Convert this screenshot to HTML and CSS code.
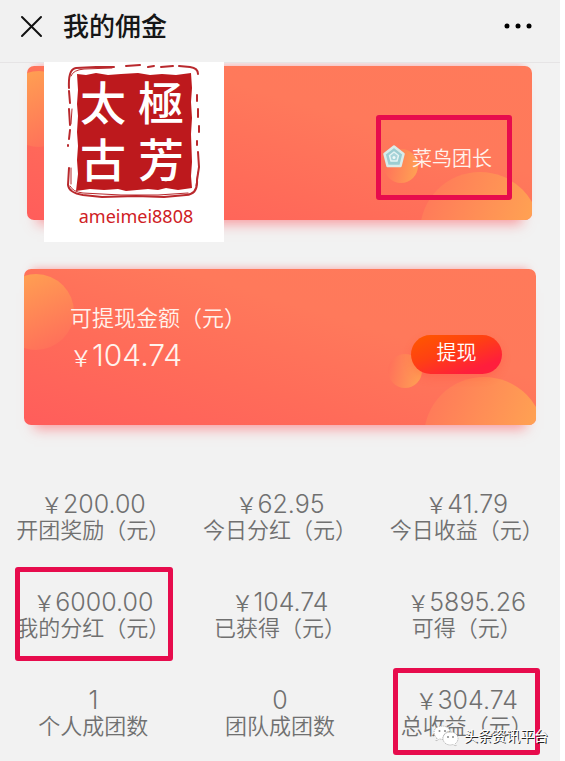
FILE: index.html
```html
<!DOCTYPE html>
<html lang="zh-CN">
<head>
<meta charset="utf-8">
<meta name="viewport" content="width=device-width, initial-scale=1">
<title>我的佣金</title>
<link rel="stylesheet" href="styles.css">
</head>
<body>
<div class="page">
  <header class="topbar">
    <button class="icon-button" type="button" aria-label="关闭">
      <svg width="24" height="24" viewBox="0 0 24 24"><path d="M3 3L22 22M22 3L3 22"/></svg>
    </button>
    <h1 class="title">我的佣金</h1>
    <button class="icon-button more" type="button" aria-label="更多">
      <svg width="28" height="6" viewBox="0 0 28 6"><circle cx="3" cy="3" r="2.5"/><circle cx="14" cy="3" r="2.5"/><circle cx="25" cy="3" r="2.5"/></svg>
    </button>
  </header>

  <main>
    <section class="card member">
      <div class="art"><i class="orb orb-left"></i><i class="orb orb-small"></i><i class="orb orb-large"></i></div>
      <div class="sticker">
        <div class="seal">
          <svg class="seal-frame" viewBox="0 0 136 136" fill="none">
            <path class="seal-fill" d="M11 10L20 11L30 9L42 11L55 10L72 9L84 11L96 10L110 11L125 9L126 24L125 38L126 54L125 70L126 98L125 112L126 124L112 126L100 124L92 126L82 125L60 127L52 125L38 126L24 125L10 127L12 110L11 96L12 82L11 68L12 52L11 40L12 26Z"/>
            <path class="seal-line" d="M3 24Q2 5 10 4L30 3L48 3M60 2L74 1M82 3L88 2M95 3L107 2M113 2L124 3Q132 4 132 10M3 27L4 39M3 45L4 61M4 66L3 75M2 81V82M3 104L2 121Q3 129 17 131L36 133L70 132L98 133L120 131Q132 130 131 116L133 103L132 88M131 31V37M132 45V53M133 62V68M131 77V81"/>
            <path class="seal-line thin" d="M5 12Q7 6 18 5L46 4M5 104L5 120M4 122Q7 128 17 129L55 131L92 131L122 129M130 122L132 108M6 45L5 60"/>
          </svg>
          <div class="seal-text"><span>太</span><span>極</span><span>古</span><span>芳</span></div>
        </div>
        <p class="account">ameimei8808</p>
      </div>
      <div class="rank">
        <svg width="22" height="24" viewBox="0 0 22 24"><path d="M11 1.500L20.500 9L17.500 21H4.500L1.500 9Z" fill="#9ccdd2" stroke="#d9ecea" stroke-width="2.500" stroke-linejoin="round"/><path d="M11 7L15.500 10.500L14 16H8L6.500 10.500Z" fill="#a9d5da" stroke="#e4f3f3" stroke-width="1.500" stroke-linejoin="round"/><circle cx="11" cy="12.500" r="1.500" fill="#eef8f8"/></svg>
        <span>菜鸟团长</span>
      </div>
    </section>

    <section class="card balance">
      <div class="art"><i class="orb orb-left"></i><i class="orb orb-small"></i><i class="orb orb-large"></i></div>
      <div class="balance-info">
        <p class="balance-label">可提现金额（元）</p>
        <p class="balance-amount"><span class="yen">￥</span>104.74</p>
      </div>
      <button class="withdraw" type="button">提现</button>
    </section>

    <dl class="stats">
      <div class="stat"><dd><span class="yen">￥</span>200.00</dd><dt>开团奖励（元）</dt></div>
      <div class="stat"><dd><span class="yen">￥</span>62.95</dd><dt>今日分红（元）</dt></div>
      <div class="stat"><dd><span class="yen">￥</span>41.79</dd><dt>今日收益（元）</dt></div>
      <div class="stat marked"><dd><span class="yen">￥</span>6000.00</dd><dt>我的分红（元）</dt></div>
      <div class="stat"><dd><span class="yen">￥</span>104.74</dd><dt>已获得（元）</dt></div>
      <div class="stat"><dd><span class="yen">￥</span>5895.26</dd><dt>可得（元）</dt></div>
      <div class="stat"><dd>1</dd><dt>个人成团数</dt></div>
      <div class="stat"><dd>0</dd><dt>团队成团数</dt></div>
      <div class="stat marked total"><dd><span class="yen">￥</span>304.74</dd><dt>总收益（元）</dt></div>
    </dl>
  </main>

  <div class="watermark">
    <svg width="26" height="22" viewBox="0 0 26 22"><path d="M9 1C4 1 1 4 1 7.500C1 10 2 11.500 4 13L3 16L6.500 14L10 14.500C10 9 13 6.500 17.500 6C16 3 13 1 9 1Z"/><path d="M17.500 7C13 7 10 10 10 13.500C10 17 13 20 17.500 20L20 19.500L23 21L22.500 18.500C24 17.500 25 15.500 25 13.500C25 10 22 7 17.500 7Z"/><g class="eyes"><circle cx="6.500" cy="6" r="1"/><circle cx="12" cy="6" r="1"/><circle cx="15" cy="12" r="1"/><circle cx="20" cy="12" r="1"/></g></svg>
    <span>头条资讯平台</span>
  </div>
</div>
</body>
</html>
```
FILE: styles.css
```css
* { box-sizing: border-box; }

body {
  margin: 0;
  background: #fff;
  color: #707070;
  font-family: "Noto Sans", "Noto Sans CJK SC", sans-serif;
}

h1, p, dl, dd { margin: 0; }

button {
  border: 0;
  padding: 0;
  background: none;
  font-family: inherit;
}

.page {
  position: relative;
  min-height: 100vh;
  margin-right: 5px;
  overflow: hidden;
  background: #f2f2f2;
}

.topbar {
  position: relative;
  z-index: 1;
  display: flex;
  align-items: center;
  height: 62px;
  padding: 0 28px 10px 19px;
  background: #f1f1f1;
  box-shadow: 0 1px 0 #e6e4e5;
}

.icon-button { display: flex; }
.icon-button path { stroke: #111; stroke-width: 2; stroke-linecap: round; }
.more { margin-left: auto; }

.title {
  margin-left: 20px;
  color: #161616;
  font-size: 26px;
  font-weight: 500;
  line-height: 32px;
}

.card {
  position: relative;
  display: flex;
  align-items: center;
  border-radius: 7px;
  background: linear-gradient(to top right, #ff5d5b 0%, #ff6c59 35%, #ff795b 65%, #ff7a5a 100%);
  color: #fff3ed;
  box-shadow: 0 -8px 8px -8px #ff6a7099, 0 14px 12px -10px #ff606899;
}

.member {
  height: 154px;
  margin: 4px 28px 0 27px;
}

.balance {
  height: 156px;
  margin: 49px 24px 0;
  padding: 0 34px 0 46px;
}

.art {
  position: absolute;
  inset: 0;
  overflow: hidden;
  border-radius: inherit;
}

.orb { position: absolute; border-radius: 50%; }

.orb-left {
  top: 5px;
  left: -26px;
  width: 76px;
  height: 76px;
  background: linear-gradient(155deg, #ffa052 10%, #ff6f5a 90%);
}

.orb-small {
  right: 114px;
  bottom: 37px;
  width: 34px;
  height: 34px;
  background: linear-gradient(100deg, #ff705a 5%, #ff9f54 90%);
}

.orb-large {
  right: -8px;
  bottom: -72px;
  width: 120px;
  height: 120px;
  background: linear-gradient(110deg, #ff785a 5%, #ffa552 85%);
}

.sticker {
  position: absolute;
  z-index: 1;
  top: -4px;
  left: 17px;
  width: 180px;
  height: 180px;
  padding: 2px 22px;
  background: #fff;
}

.seal { position: relative; width: 136px; height: 136px; }
.seal-frame { display: block; }
.seal-fill { fill: #bd191d; }
.seal-line { stroke: #b9292d; stroke-width: 2; stroke-linecap: round; stroke-linejoin: round; }
.thin { stroke-width: 1; }

.seal-text {
  position: absolute;
  inset: 8px 12px 14px 8px;
  display: grid;
  grid-template-columns: 1fr 1fr;
  place-items: center;
  color: #fff;
  font-family: "Noto Sans CJK TC", sans-serif;
  font-size: 46px;
  font-weight: 500;
  line-height: 57px;
}

.account {
  margin-top: 2px;
  padding-left: 4px;
  color: #cf2024;
  font-size: 18px;
  line-height: 28px;
  text-align: center;
}

.rank {
  display: flex;
  align-items: center;
  gap: 7px;
  position: relative;
  margin: 28px 20px 0 auto;
  width: 136px;
  height: 85px;
  border: 5px solid #e70c4d;
  border-radius: 3px;
  padding: 0 0 0 2px;
  font-size: 20px;
  font-weight: 350;
}

.balance-info {
  position: relative;
  padding-bottom: 16px;
}

.balance-label {
  font-size: 22px;
  font-weight: 350;
  line-height: 32px;
}

.balance-amount {
  font-family: Inter, sans-serif;
  font-size: 30px;
  font-weight: 300;
  line-height: 44px;
}

.yen {
  font-family: "Noto Sans CJK SC", sans-serif;
  font-size: 22px;
  font-weight: 350;
  line-height: 1;
}

.withdraw {
  position: relative;
  margin: 14px 0 0 auto;
  padding-bottom: 6px;
  width: 91px;
  height: 39px;
  border-radius: 20px;
  background: linear-gradient(160deg, #ff5600 5%, #ff4112 40%, #ff1e3c 80%);
  box-shadow: 0 4px 8px #ff403840;
  color: #fff;
  font-size: 20px;
  font-weight: 350;
}

.stats {
  display: grid;
  grid-template-columns: repeat(3, 1fr);
  row-gap: 48px;
  margin-top: 66px;
  text-align: center;
}

.stat {
  position: relative;
  display: flex;
  flex-direction: column;
  align-items: center;
}

.stat dd {
  font-family: Inter, sans-serif;
  font-size: 25px;
  font-weight: 300;
  line-height: 26px;
}

.stat dt {
  font-size: 22px;
  font-weight: 350;
  line-height: 24px;
  white-space: nowrap;
}

.marked::after {
  content: "";
  position: absolute;
  inset: -22px 14px -22px 15px;
  border: 5px solid #e70c4d;
  border-radius: 3px;
}

.total::after { inset: -19px 20px -18px; }

.watermark {
  position: absolute;
  right: 12px;
  bottom: 14px;
  display: flex;
  align-items: center;
  gap: 5px;
  color: #fff;
  font-size: 14px;
  line-height: 22px;
  text-shadow: 1px 1px 0 #222;
}

.watermark path { fill: #fff; stroke: #aaa; stroke-width: 1; stroke-dasharray: 1 1; }
.eyes { fill: #888; }
```
